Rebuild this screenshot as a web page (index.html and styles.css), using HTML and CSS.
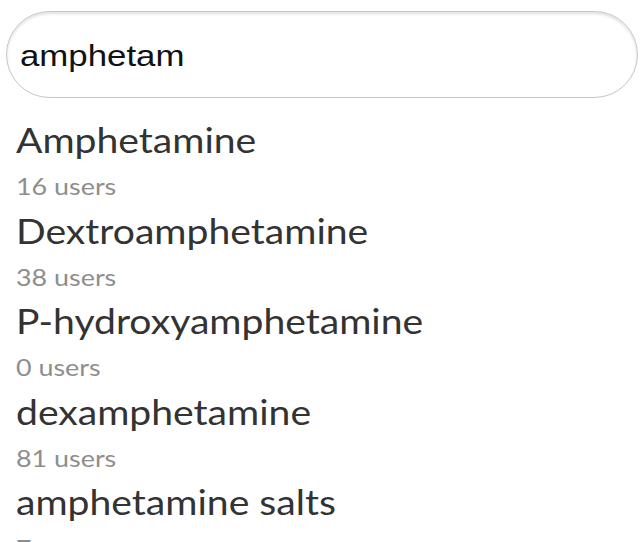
FILE: index.html
```html
<!DOCTYPE html>
<html>
<head>
<meta charset="utf-8">
<link rel="stylesheet" href="styles.css">
</head>
<body>
<div class="page">
  <div class="search">
    <span class="search-text">amphetam</span>
  </div>
  <ul class="results">
    <li class="result"><div class="name">Amphetamine</div><div class="count">16 users</div></li>
    <li class="result"><div class="name">Dextroamphetamine</div><div class="count">38 users</div></li>
    <li class="result"><div class="name">P-hydroxyamphetamine</div><div class="count">0 users</div></li>
    <li class="result"><div class="name">dexamphetamine</div><div class="count">81 users</div></li>
    <li class="result"><div class="name">amphetamine salts</div><div class="count">7 users</div></li>
  </ul>
</div>
</body>
</html>
```
FILE: styles.css
```css
html, body {
  margin: 0;
  padding: 0;
  background: #ffffff;
  overflow: hidden;
}
.page {
  width: 643px;
  height: 542px;
  overflow: hidden;
  padding-top: 11px;
  box-sizing: border-box;
}
.search {
  margin: 0 5px 0 6px;
  height: 87px;
  box-sizing: border-box;
  border: 1.5px solid #c6c6c6;
  border-radius: 44px;
  box-shadow: inset 0 2px 3px rgba(0,0,0,0.12);
  display: flex;
  align-items: center;
  padding-left: 13px;
  padding-top: 4px;
}
.search-text {
  font-family: "Liberation Sans", Arial, sans-serif;
  font-size: 29px;
  color: #111;
  display: inline-block;
  transform: scaleX(1.2);
  transform-origin: left center;
}
.results {
  list-style: none;
  margin: 17px 0 0 0;
  padding: 0 0 0 16px;
}
.result {
  height: 90.5px;
}
.name {
  font-family: Lato, "Open Sans", sans-serif;
  font-size: 34px;
  line-height: 50px;
  color: #333;
  transform: scaleX(1.15);
  transform-origin: left center;
}
.count {
  font-family: Lato, "Open Sans", sans-serif;
  font-size: 24px;
  line-height: 30px;
  padding-top: 6px;
  color: #8e8e8e;
  transform: scaleX(1.12);
  transform-origin: left center;
}
```
